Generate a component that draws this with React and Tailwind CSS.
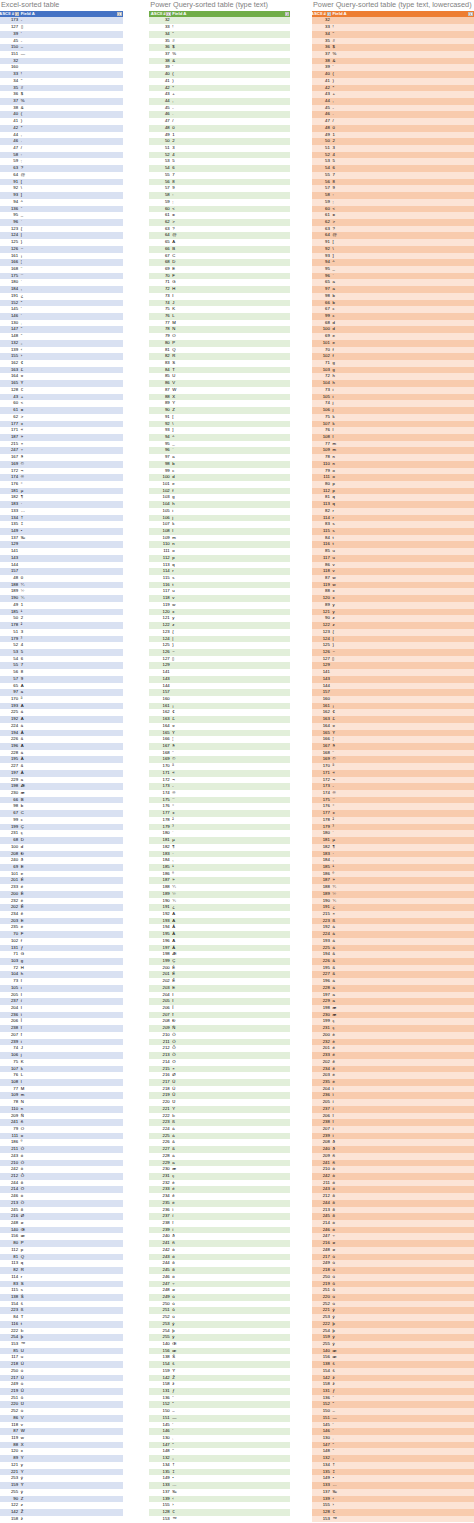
const CP = {
  128: 0x20ac, 129: 0x81, 130: 0x201a, 131: 0x192, 132: 0x201e, 133: 0x2026, 134: 0x2020, 135: 0x2021,
  136: 0x2c6, 137: 0x2030, 138: 0x160, 139: 0x2039, 140: 0x152, 141: 0x8d, 142: 0x17d, 143: 0x8f,
  144: 0x90, 145: 0x2018, 146: 0x2019, 147: 0x201c, 148: 0x201d, 149: 0x2022, 150: 0x2013, 151: 0x2014,
  152: 0x2dc, 153: 0x2122, 154: 0x161, 155: 0x203a, 156: 0x153, 157: 0x9d, 158: 0x17e, 159: 0x178,
}
const uni = (n) => CP[n] ?? n
const blank = [129, 141, 143, 144, 157]

function glyph(n, lower) {
  if (blank.includes(n)) return ''
  if (n === 127) return '\u25AF'
  if (n === 173) return '-'
  const s = String.fromCharCode(uni(n))
  return lower ? s.toLowerCase() : s
}
const lowCode = (n) => String.fromCharCode(uni(n)).toLowerCase().charCodeAt(0)

// order as Excel's own sort left it
const EXCEL = [
  173, 127, 39, 45, 150, 151, 32, 160, 33, 34, 35, 36, 37, 38, 40, 41, 42, 44, 46, 47, 58, 59, 63, 64, 91, 92,
  93, 94, 136, 95, 96, 123, 124, 125, 126, 161, 166, 168, 175, 180, 184, 191, 152, 145, 146, 130, 147, 148, 132,
  139, 155, 162, 163, 164, 165, 128, 43, 60, 61, 62, 177, 171, 187, 215, 247, 167, 169, 172, 174, 176, 181, 182,
  183, 133, 134, 135, 149, 137, 129, 141, 143, 144, 157, 48, 188, 189, 190, 49, 185, 50, 178, 51, 179, 52, 53,
  54, 55, 56, 57, 65, 97, 170, 193, 225, 192, 224, 194, 226, 196, 228, 195, 227, 197, 229, 198, 230, 66, 98, 67,
  99, 199, 231, 68, 100, 208, 240, 69, 101, 201, 233, 200, 232, 202, 234, 203, 235, 70, 102, 131, 71, 103, 72,
  104, 73, 105, 205, 237, 204, 236, 206, 238, 207, 239, 74, 106, 75, 107, 76, 108, 77, 109, 78, 110, 209, 241,
  79, 111, 186, 211, 243, 210, 242, 212, 244, 214, 246, 213, 245, 216, 248, 140, 156, 80, 112, 81, 113, 82, 114,
  83, 115, 138, 154, 223, 84, 116, 222, 254, 153, 85, 117, 218, 250, 217, 249, 219, 251, 220, 252, 86, 118, 87,
  119, 88, 120, 89, 121, 221, 253, 159, 255, 90, 122, 142, 158,
]

// pairs where the lowercase code came out first in the lowercased sort
const lowerFirst = [98]

const ALL = Array.from({ length: 224 }, (_, i) => i + 32)
const PQ = [...ALL].sort((a, b) => uni(a) - uni(b))
const PQL = [...ALL].sort((a, b) => {
  const d = lowCode(a) - lowCode(b)
  if (d) return d
  if (lowerFirst.includes(a)) return -1
  if (lowerFirst.includes(b)) return 1
  return a - b
})

function FilterBtn() {
  return (
    <div className="flex h-[4.6px] w-[4.4px] shrink-0 items-center justify-center border-[0.4px] border-[#bfbfbf] bg-[#f2f2f2]">
      <svg viewBox="0 0 4 4" className="h-[2.6px] w-[2.6px]">
        <path d="M0.6 1.2 L3.4 1.2 L2 2.9 Z" fill="#404040" />
      </svg>
    </div>
  )
}

function Table({ title, codes, lower, head, bandA, bandB, numW, width, ml }) {
  return (
    <div className={`${width} ${ml} shrink-0`}>
      <div className="h-[10.66px] whitespace-nowrap pl-[1px] text-[7.3px] leading-[10px] text-[#7f7f7f]">{title}</div>
      <div className={`flex h-[6.72px] items-center text-[4.3px] font-bold text-white ${head}`}>
        <div className={`flex ${numW} shrink-0 items-center justify-end gap-[0.6px] pr-[0.6px]`}>
          <span className="whitespace-nowrap">ASCII #</span>
          <FilterBtn />
        </div>
        <div className="flex flex-1 items-center justify-between pl-[1px] pr-[1.2px]">
          <span>Field A</span>
          <FilterBtn />
        </div>
      </div>
      {codes.map((n, i) => (
        <div key={n} className={`flex h-[6.72px] items-center text-[4.3px] leading-[6.72px] text-black ${i % 2 === 0 ? bandA : bandB}`}>
          <div className={`${numW} shrink-0 pr-[1.6px] text-right`}>{n}</div>
          <div className="pl-[1px]">{glyph(n, lower)}</div>
        </div>
      ))}
    </div>
  )
}

export default function App() {
  return (
    <div className="flex h-[1523px] w-[474px] overflow-hidden bg-white font-['Liberation_Sans',Arial,sans-serif]">
      <Table
        title="Excel-sorted table"
        codes={EXCEL}
        head="bg-[#4472c4]"
        bandA="bg-[#d9e1f2]"
        bandB="bg-white"
        numW="w-[19.7px]"
        width="w-[123px]"
        ml="ml-0"
      />
      <Table
        title="Power Query-sorted table (type text)"
        codes={PQ}
        head="bg-[#70ad47]"
        bandA="bg-[#e2efda]"
        bandB="bg-white"
        numW="w-[22px]"
        width="w-[141px]"
        ml="ml-[26.3px]"
      />
      <Table
        title="Power Query-sorted table (type text, lowercased)"
        codes={PQL}
        lower
        head="bg-[#ed7d31]"
        bandA="bg-[#f8cbad]"
        bandB="bg-[#fce4d6]"
        numW="w-[19.5px]"
        width="w-[162px]"
        ml="ml-[21.7px]"
      />
    </div>
  )
}
